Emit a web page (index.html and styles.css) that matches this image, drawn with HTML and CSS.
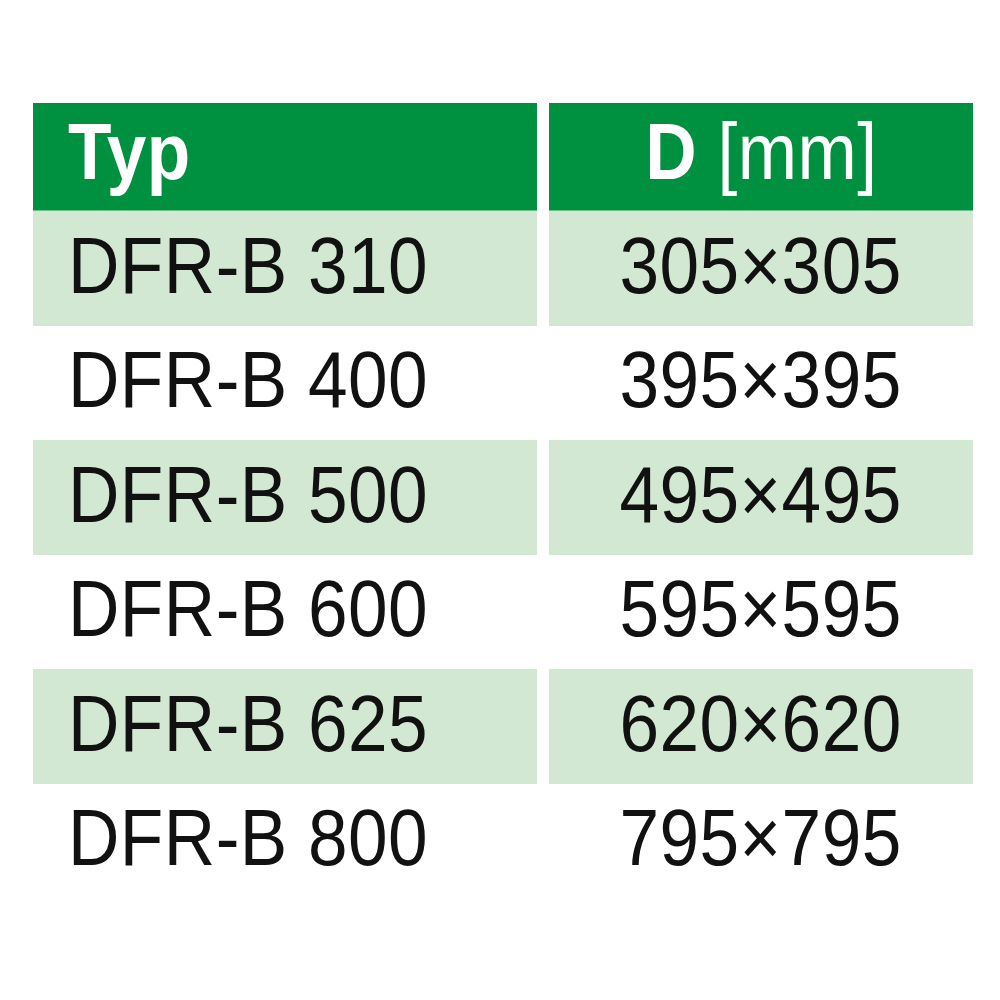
FILE: index.html
```html
<!DOCTYPE html>
<html lang="de">
<head>
<meta charset="utf-8">
<title>DFR-B</title>
<link rel="stylesheet" href="styles.css">
</head>
<body>
<div class="table">
  <div class="cell head left"><span class="txt"><b>Typ</b></span></div>
  <div class="cell head right"><span class="txt"><b>D</b> [mm]</span></div>

  <div class="cell shade left"><span class="txt">DFR-B 310</span></div>
  <div class="cell shade right"><span class="txt">305×305</span></div>

  <div class="cell left"><span class="txt">DFR-B 400</span></div>
  <div class="cell right"><span class="txt">395×395</span></div>

  <div class="cell shade left"><span class="txt">DFR-B 500</span></div>
  <div class="cell shade right"><span class="txt">495×495</span></div>

  <div class="cell left"><span class="txt">DFR-B 600</span></div>
  <div class="cell right"><span class="txt">595×595</span></div>

  <div class="cell shade left"><span class="txt">DFR-B 625</span></div>
  <div class="cell shade right"><span class="txt">620×620</span></div>

  <div class="cell left"><span class="txt">DFR-B 800</span></div>
  <div class="cell right"><span class="txt">795×795</span></div>
</div>
</body>
</html>
```
FILE: styles.css
```css
html, body {
  margin: 0;
  padding: 0;
  background: #ffffff;
}

body {
  font-family: "Liberation Sans", Arial, sans-serif;
  color: #111111;
}

.table {
  display: grid;
  grid-template-columns: 504px 424px;
  grid-auto-rows: 114.5px;
  grid-template-rows: 108px;
  column-gap: 12px;
  margin: 103px 0 0 33px;
  width: 940px;
}

.cell {
  display: flex;
  align-items: center;
  font-size: 80px;
  line-height: 80px;
  padding-bottom: 5px;
  box-sizing: border-box;
  overflow: hidden;
  white-space: nowrap;
}

.cell.left {
  justify-content: flex-start;
  padding-left: 35px;
}

.cell.right {
  justify-content: center;
}

.txt {
  display: inline-block;
  transform: scaleX(0.89);
  letter-spacing: 0.5px;
}

.left .txt {
  transform-origin: left center;
}

.right .txt {
  transform-origin: center center;
}

.head {
  background: #009140;
  color: #ffffff;
  padding-bottom: 9px;
  border-bottom: 1px solid #6cbf88;
}

.head b {
  font-weight: 700;
}

.shade {
  background: #d2e8d3;
}
```
